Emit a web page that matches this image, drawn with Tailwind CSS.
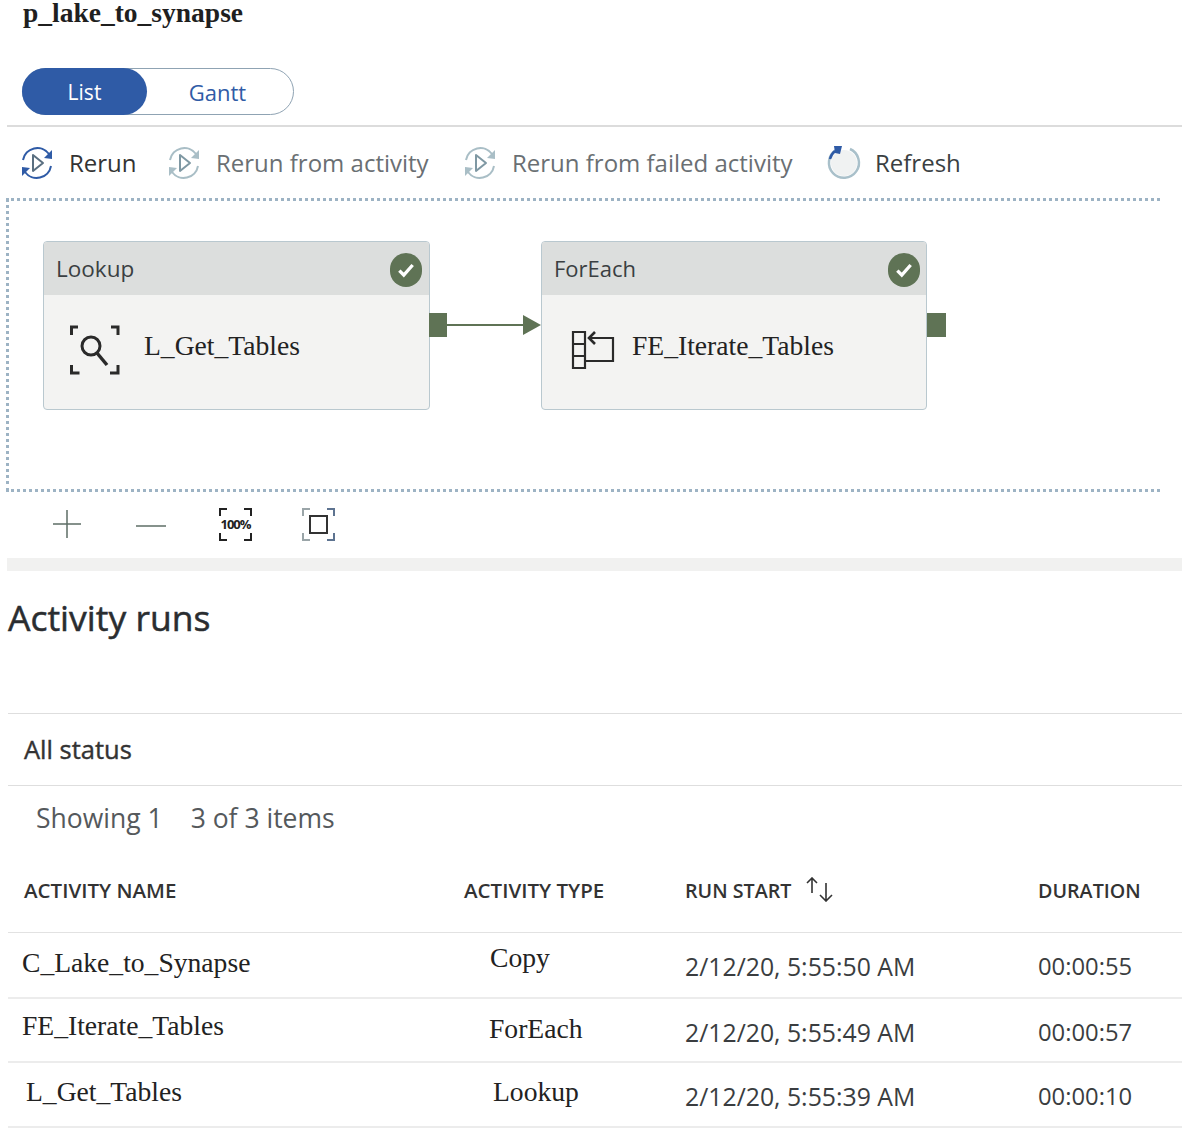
<!DOCTYPE html>
<html lang="en">
<head>
    <meta charset="utf-8">
    <meta name="viewport" content="width=device-width, initial-scale=1.0">
    <title>p_lake_to_synapse</title>
    <script src="https://cdn.jsdelivr.net/npm/@tailwindcss/browser@4"></script>
</head>
<body class="bg-white text-[#252525] font-['Open_Sans',sans-serif]">
    <div class="w-[1182px] h-[1133px] overflow-hidden">

        <!-- Title and view switch -->
        <h1 class="h-[68px] pl-[23px] font-['Liberation_Serif',serif] font-bold text-[27.5px] leading-[25px] text-[#1f1f1f]">p_lake_to_synapse</h1>
        <div class="ml-[22px] w-[272px] h-[47px] flex rounded-full border border-[#8fa3b3]">
            <div class="w-[125px] -ml-px -my-px h-[47px] pt-[2px] rounded-full bg-[#2f5ba6] text-white text-[21px] flex items-center justify-center">List</div>
            <div class="flex-1 pl-[20px] pr-[25px] pt-[2px] text-[#2f5ba6] text-[22px] flex items-center justify-center">Gantt</div>
        </div>
        <div class="mt-[10px] ml-[7px] h-[2px] bg-[#dcdcdc]"></div>

        <!-- Toolbar -->
        <div class="h-[71px] pl-[19px] pt-[1px] flex items-center text-[24px]">
            <div class="flex items-center w-[147px] text-[#333]">
                <svg width="36" height="36" viewBox="0 0 36 36" fill="none" class="mr-[14px]">
                    <path d="M4 15A14.5 14.5 0 0 1 30 9M32 21A14.5 14.5 0 0 1 6 27" stroke="#2f5ba6" stroke-width="2"/>
                    <path d="M33 5v9l-8-1zM3 31v-9l8 1z" fill="#2f5ba6"/>
                    <path d="M14 10l10 8-10 8z" stroke="#5a6f80" stroke-width="2" stroke-linejoin="round"/>
                </svg>
                Rerun
            </div>
            <div class="flex items-center w-[296px] text-[#6a6f73]">
                <svg width="36" height="36" viewBox="0 0 36 36" fill="none" class="mr-[14px]">
                    <path d="M4 15A14.5 14.5 0 0 1 30 9M32 21A14.5 14.5 0 0 1 6 27" stroke="#a9bec6" stroke-width="2"/>
                    <path d="M33 5v9l-8-1zM3 31v-9l8 1z" fill="#a9bec6"/>
                    <path d="M14 10l10 8-10 8z" stroke="#7f98a3" stroke-width="2" stroke-linejoin="round"/>
                </svg>
                Rerun from activity
            </div>
            <div class="flex items-center w-[364px] text-[#6a6f73]">
                <svg width="36" height="36" viewBox="0 0 36 36" fill="none" class="mr-[14px]">
                    <path d="M4 15A14.5 14.5 0 0 1 30 9M32 21A14.5 14.5 0 0 1 6 27" stroke="#a9bec6" stroke-width="2"/>
                    <path d="M33 5v9l-8-1zM3 31v-9l8 1z" fill="#a9bec6"/>
                    <path d="M14 10l10 8-10 8z" stroke="#7f98a3" stroke-width="2" stroke-linejoin="round"/>
                </svg>
                Rerun from failed activity
            </div>
            <div class="flex items-center text-[#3a3f42]">
                <svg width="36" height="36" viewBox="0 0 36 36" fill="none" class="mr-[13px]">
                    <circle cx="18" cy="18" r="13" fill="#f0f2f2"/>
                    <path d="M24 4a15 15 0 1 1-14 1" stroke="#a9c0ca" stroke-width="2.5"/>
                    <path d="M9 6a15 15 0 0 0-5 8" stroke="#2f5ba6" stroke-width="2.5"/>
                    <path d="M8 1h8l-2 8-5-1z" fill="#2f5ba6"/>
                </svg>
                Refresh
            </div>
        </div>

        <!-- Pipeline canvas -->
        <div class="relative ml-[6px] w-[1154px] h-[294px] border-t-[3px] border-l-[3px] border-b-[3px] border-dotted border-[#9db3c4]">
            <div class="absolute left-[34px] top-[40px] w-[387px] h-[169px] rounded-[4px] bg-[#f3f3f2] border border-[#b9c8cf] overflow-hidden">
                <div class="h-[53px] bg-[#dcdedd] pl-[12px] pr-[7px] flex items-center justify-between text-[22.5px] text-[#3a3f42]">
                    Lookup
                    <span class="w-[32px] h-[34px] mt-[3px] rounded-full bg-[#5f7355] flex items-center justify-center">
                        <svg width="20" height="20" viewBox="0 0 18 18" fill="none"><path d="M3 9.5l4 4 8-9" stroke="#fff" stroke-width="3"/></svg>
                    </span>
                </div>
                <div class="h-[101px] pl-[26px] flex items-center">
                    <svg width="50" height="50" viewBox="0 0 50 50" fill="none" class="mr-[24px] mt-[8px]" stroke="#2a2a2a">
                        <path d="M8 2H1.500v8M41 2h7v8M1.500 40v8h8M48 40v8h-8" stroke-width="3"/>
                        <circle cx="21" cy="21" r="9" stroke-width="3"/>
                        <path d="M27 28l10 12" stroke-width="3.500"/>
                    </svg>
                    <span class="font-['Liberation_Serif',serif] text-[27.6px] text-[#222]">L_Get_Tables</span>
                </div>
            </div>
            <div class="absolute left-[420px] top-[112px] w-[18px] h-[24px] bg-[#5f7355]"></div>
            <div class="absolute left-[437px] top-[123px] w-[80px] h-[2px] bg-[#5f7355]"></div>
            <div class="absolute left-[514px] top-[114px] w-0 h-0 border-y-[10px] border-y-transparent border-l-[18px] border-l-[#5f7355]"></div>

            <div class="absolute left-[532px] top-[40px] w-[386px] h-[169px] rounded-[4px] bg-[#f3f3f2] border border-[#b9c8cf] overflow-hidden">
                <div class="h-[53px] bg-[#dcdedd] pl-[12px] pr-[6px] flex items-center justify-between text-[22px] text-[#3a3f42]">
                    ForEach
                    <span class="w-[32px] h-[34px] mt-[3px] rounded-full bg-[#5f7355] flex items-center justify-center">
                        <svg width="20" height="20" viewBox="0 0 18 18" fill="none"><path d="M3 9.5l4 4 8-9" stroke="#fff" stroke-width="3"/></svg>
                    </span>
                </div>
                <div class="h-[101px] pl-[29px] flex items-center">
                    <svg width="44" height="40" viewBox="0 0 44 40" fill="none" class="mr-[17px] mt-[8px]" stroke="#2a2a2a" stroke-width="2.2">
                        <path d="M2 2h12v36H2zM2 14h12M2 26h12"/>
                        <path d="M24 2l-6 6 6 6" stroke-width="2.6"/>
                        <path d="M18 8h24v23H14"/>
                    </svg>
                    <span class="font-['Liberation_Serif',serif] text-[27.6px] text-[#222]">FE_Iterate_Tables</span>
                </div>
            </div>
            <div class="absolute left-[918px] top-[112px] w-[19px] h-[24px] bg-[#5f7355]"></div>
        </div>

        <!-- Zoom controls -->
        <div class="h-[66px] pl-[52px] pb-[2px] flex items-center">
            <svg width="30" height="30" viewBox="0 0 30 30" fill="none" stroke="#5e6e66" stroke-width="1.5" class="mr-[54px]"><path d="M15 1v28M1 15h28"/></svg>
            <svg width="30" height="30" viewBox="0 0 30 30" fill="none" stroke="#5e6e66" stroke-width="1.5" class="mr-[53px]"><path d="M0 17h30"/></svg>
            <div class="relative w-[33px] h-[33px] mr-[50px] text-[13px] font-bold leading-[33px] text-center tracking-[-1px] text-[#222]">
                100%
                <svg width="33" height="33" viewBox="0 0 33 33" fill="none" stroke="#222" stroke-width="2" class="absolute inset-0"><path d="M8 1H1v7M25 1h7v7M1 25v7h7M32 25v7h-7"/></svg>
            </div>
            <svg width="33" height="33" viewBox="0 0 33 33" fill="none" stroke-width="2"><path d="M8 1H1v7M1 25v7h7" stroke="#9aa5a8"/><path d="M25 1h7v7M32 25v7h-7" stroke="#5d7390"/><path d="M8 8h17v17H8z" stroke="#333"/></svg>
        </div>
        <div class="ml-[7px] h-[13px] bg-[#f1f1f0]"></div>

        <!-- Activity runs -->
        <h2 class="h-[142px] pl-[8px] pt-[23px] text-[35.5px] leading-[46px] [-webkit-text-stroke:0.5px_#2a2d30] text-[#2a2d30]">Activity runs</h2>
        <div class="ml-[8px] border-t border-[#dedede]">
            <div class="h-[72px] pl-[16px] flex items-center text-[25.5px] [-webkit-text-stroke:0.4px_#333] text-[#333] border-b border-[#dedede]">All status</div>
            <div class="h-[66px] pl-[28px] flex items-center text-[26.5px] text-[#55595c]">Showing 1 <span class="ml-[28px]">3 of 3 items</span></div>

            <div class="grid grid-cols-[456px_221px_353px_1fr] h-[81px] items-center pb-[3px] border-b border-[#e2e2e2] text-[19.7px] font-semibold text-[#333]">
                <div class="pl-[16px] text-[20.5px]">ACTIVITY NAME</div>
                <div class="text-[20.5px]">ACTIVITY TYPE</div>
                <div class="flex items-center">RUN START
                    <svg width="30" height="25" viewBox="0 0 30 25" fill="none" stroke="#333" stroke-width="1.6" class="ml-[13px] -mt-[2px]"><path d="M8 16V1M3 6l5-5 5 5M22 6v18M16 18l6 6 6-6"/></svg>
                </div>
                <div>DURATION</div>
            </div>

            <div class="grid grid-cols-[456px_221px_353px_1fr] h-[66px] items-center border-b-2 border-[#ececec] text-[24.8px] text-[#3a3d40]">
                <div class="pl-[14px] pb-[5px] font-['Liberation_Serif',serif] text-[27.6px] text-[#222]">C_Lake_to_Synapse</div>
                <div class="pl-[26px] pb-[15px] font-['Liberation_Serif',serif] text-[27.6px] text-[#222]">Copy</div>
                <div class="pt-[3px]">2/12/20, 5:55:50 AM</div>
                <div class="pt-[3px] text-[23.8px]">00:00:55</div>
            </div>
            <div class="grid grid-cols-[456px_221px_353px_1fr] h-[64px] items-center border-b-2 border-[#ececec] text-[24.8px] text-[#3a3d40]">
                <div class="pl-[14px] pb-[9px] font-['Liberation_Serif',serif] text-[27.6px] text-[#222]">FE_Iterate_Tables</div>
                <div class="pl-[25px] pb-[2px] font-['Liberation_Serif',serif] text-[27.6px] text-[#222]">ForEach</div>
                <div class="pt-[6px]">2/12/20, 5:55:49 AM</div>
                <div class="pt-[6px] text-[23.8px]">00:00:57</div>
            </div>
            <div class="grid grid-cols-[456px_221px_353px_1fr] h-[65px] items-center border-b-2 border-[#ececec] text-[24.8px] text-[#3a3d40]">
                <div class="pl-[18px] pb-[6px] font-['Liberation_Serif',serif] text-[27.6px] text-[#222]">L_Get_Tables</div>
                <div class="pl-[29px] pb-[6px] font-['Liberation_Serif',serif] text-[27.6px] text-[#222]">Lookup</div>
                <div class="pt-[4px]">2/12/20, 5:55:39 AM</div>
                <div class="pt-[4px] text-[23.8px]">00:00:10</div>
            </div>
        </div>
    </div>
</body>
</html>
